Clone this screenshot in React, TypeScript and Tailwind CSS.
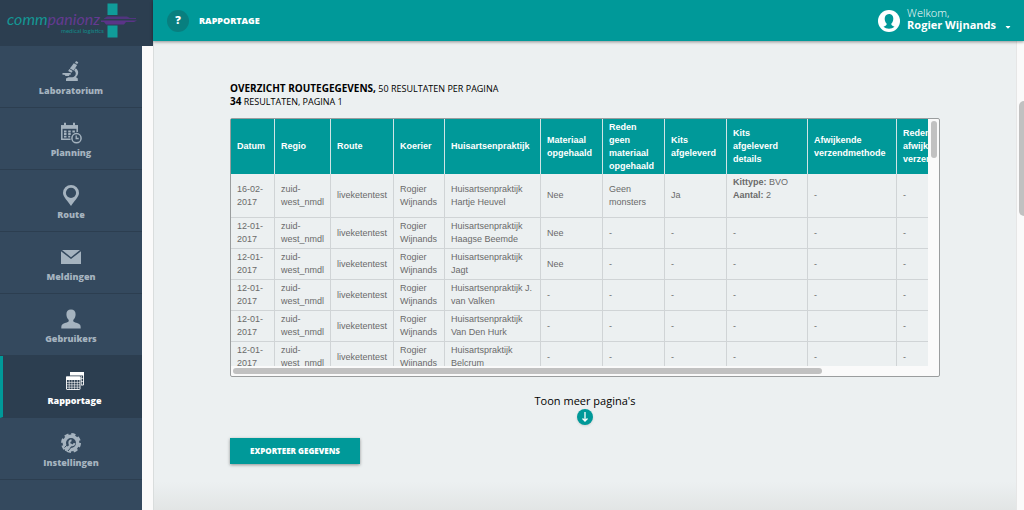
import React from "react";
import { FaCaretDown } from "react-icons/fa";

type Row = {
  datum: string;
  praktijk: string[];
  materiaal: string;
  reden: string;
  kits: string;
  details?: { kittype: string; aantal: number };
};

const rows: Row[] = [
  { datum: "16-02-2017", praktijk: ["Huisartsenpraktijk", "Hartje Heuvel"], materiaal: "Nee", reden: "Geen monsters", kits: "Ja", details: { kittype: "BVO", aantal: 2 } },
  { datum: "12-01-2017", praktijk: ["Huisartsenpraktijk", "Haagse Beemde"], materiaal: "Nee", reden: "-", kits: "-" },
  { datum: "12-01-2017", praktijk: ["Huisartsenpraktijk", "Jagt"], materiaal: "Nee", reden: "-", kits: "-" },
  { datum: "12-01-2017", praktijk: ["Huisartsenpraktijk J.", "van Valken"], materiaal: "-", reden: "-", kits: "-" },
  { datum: "12-01-2017", praktijk: ["Huisartsenpraktijk", "Van Den Hurk"], materiaal: "-", reden: "-", kits: "-" },
  { datum: "12-01-2017", praktijk: ["Huisartspraktijk", "Belcrum"], materiaal: "-", reden: "-", kits: "-" },
];

const columns = [
  { label: "Datum", width: "w-[44px]" },
  { label: "Regio", width: "w-[56px]" },
  { label: "Route", width: "w-[63px]" },
  { label: "Koerier", width: "w-[51px]" },
  { label: "Huisartsenpraktijk", width: "w-[96px]" },
  { label: "Materiaal opgehaald", width: "w-[62px]" },
  { label: "Reden geen materiaal opgehaald", width: "w-[62px]" },
  { label: "Kits afgeleverd", width: "w-[62px]" },
  { label: "Kits\nafgeleverd\ndetails", width: "w-[81px]" },
  { label: "Afwijkende verzendmethode", width: "w-[89px]" },
  { label: "Reden afwijkende verzendmethode", width: "w-[89px]" },
];

const MicroscopeIcon = () => (
  <svg viewBox="0 0 20 20" className="h-5 w-5" fill="currentColor">
    <path d="M15 0l2.300 1.200-1 1.900L14 1.900z" />
    <path d="M12.800 2.200l3.300 1.900-3.400 5.500-3.800-2.200z" />
    <path d="M8.300 7.900l3.400 2-1.300 1.900-3.200-1.900z" />
    <path d="M14.600 7.200c3.400 2 3.400 6.600.2 8.900l2 1.500V20H5v-2.400l2.400-1.300h3.900c3.700-.7 4.700-4.300 1.900-6.800z" />
    <path d="M1.500 12h8.200v1.800H8.200v1.300H4.600l-1.100-1.300h-2z" />
  </svg>
);

const PlanningIcon = () => (
  <svg viewBox="0 0 22 22" className="h-[22px] w-[22px]" fill="none" stroke="currentColor">
    <path d="M10.500 17.200H1.800V4h15.400v6" strokeWidth="1.500" />
    <path d="M1 3.200h17v3.600H1z" fill="currentColor" stroke="none" />
    <path d="M5 .8v3M14 .8v3" strokeWidth="2" />
    <path d="M4 9.500h2.500M8.200 9.500h2.500M12.400 9.500h2.500M4 12h2.500M8.200 12h2.500M4 14.600h2.500M8.200 14.600h2" strokeWidth="1.900" />
    <circle cx="16.500" cy="16.200" r="4.600" strokeWidth="1.500" />
    <path d="M16.200 13.500v3h2.500" strokeWidth="1.300" />
  </svg>
);

const RouteIcon = () => (
  <svg viewBox="0 0 16 21" className="h-[21px] w-4" fill="currentColor" fillRule="evenodd">
    <path d="M8 0a8 8 0 0 0-8 8c0 4 5 8 8 13 3-5 8-9 8-13a8 8 0 0 0-8-8zm0 2.700a5 5 0 1 1 0 10.200A5 5 0 0 1 8 2.700z" />
  </svg>
);

const MailIcon = () => (
  <svg viewBox="0 0 20 14" className="h-[14px] w-5" fill="currentColor">
    <path d="M1 0h18l-9 7.200z" />
    <path d="M0 1.200l10 7.900 10-7.900V14H0z" />
  </svg>
);

const UserIcon = () => (
  <svg viewBox="0 0 20 20" className="h-5 w-5" fill="currentColor">
    <path d="M10 .5c-3 0-4.600 2-4.600 4.800 0 2 .7 4.200 2 5.300.5.700.5 1.700-.1 2.200-1.700 1-5.100 1.600-6.300 2.900C.3 16.500.3 18 .3 19.500h19.400c0-1.500 0-3-.7-3.800-1.200-1.300-4.600-1.900-6.300-2.900-.6-.5-.6-1.500-.1-2.200 1.300-1.100 2-3.300 2-5.300C14.600 2.500 13 .5 10 .5z" />
  </svg>
);

const RapportageIcon = () => (
  <svg viewBox="0 0 20 20" className="h-5 w-5" fill="none" stroke="currentColor">
    <path d="M5.500 4V1.500h13V14H16" strokeWidth=".9" />
    <path d="M5 1h14v3.500H5z" fill="currentColor" stroke="none" />
    <path d="M16 7.500h2.500M16 10.500h2.500M16.500 5v9" strokeWidth=".6" />
    <rect x="1.500" y="6" width="13.500" height="12.500" rx=".5" strokeWidth=".9" />
    <path d="M1 5.500h14.500V9H1z" fill="currentColor" stroke="none" />
    <path d="M4.200 9v9.500M6.900 9v9.500M9.600 9v9.500M12.300 9v9.500M1.500 11.400h13.500M1.500 13.800h13.500M1.500 16.200h13.500" strokeWidth=".6" />
  </svg>
);

// gear with a wrench lying over the lower left
const SettingsIcon = () => (
  <svg viewBox="0 0 20 20" className="h-5 w-5" fill="none" stroke="currentColor">
    <circle cx="10" cy="10" r="6.700" strokeWidth="3.400" />
    <circle cx="10" cy="10" r="8.900" strokeWidth="2.200" strokeDasharray="4.200 2.790" />
    <path d="M3.500 14.500l3-2.800M7 18l2.500-3" stroke="#34495e" strokeWidth="1" />
    <path d="M5 16.800l5-5" strokeWidth="2.400" strokeLinecap="round" />
    <path d="M10.500 7.200a2.600 2.600 0 1 0 3 3" strokeWidth="1.900" />
  </svg>
);

const menuItems = [
  { label: "Laboratorium", icon: <MicroscopeIcon /> },
  { label: "Planning", icon: <PlanningIcon /> },
  { label: "Route", icon: <RouteIcon /> },
  { label: "Meldingen", icon: <MailIcon /> },
  { label: "Gebruikers", icon: <UserIcon /> },
  { label: "Rapportage", icon: <RapportageIcon />, active: true },
  { label: "Instellingen", icon: <SettingsIcon /> },
];

const Logo = () => (
  <div className="h-[46px] w-full bg-[#2c3e50]">
    <svg viewBox="0 0 153 46" className="h-[46px] w-[153px]" role="img" aria-label="commpanionz medical logistics">
      <path d="M107.500 3.500h10v11.500h-10zM107.500 25.500h10v12h-10z" fill="#109c9a" />
      <path d="M104 18.500l3-2h20l3 1.500h6v1h-32z" fill="#51357f" />
      <path d="M101 20.500h36l-3 1.500h-8l-2 2.500h-18l-2-2.500h-3z" fill="#5b3488" />
      <text x="7" y="25" fontFamily="Lato" fontSize="16" fontStyle="italic">
        <tspan fill="#149694">comm</tspan>
        <tspan fill="#643a90">panionz</tspan>
      </text>
      <text x="61" y="33" fontFamily="Lato" fontSize="6" fill="#128a89">medical logistics</text>
    </svg>
  </div>
);

const Sidebar = () => (
  <aside className="flex w-[153px] shrink-0 flex-col bg-[#fafafa]">
    <Logo />
    <nav className="w-[142px] flex-1 bg-[#34495e]">
      {menuItems.map((item) => (
        <a
          key={item.label}
          href="#"
          className={
            item.active
              ? "flex h-[62px] flex-col items-center border-b border-[#2c3e50] border-l-[3px] border-l-[#009999] bg-[#2c3e50] pl-1 pt-[13px] text-white"
              : "flex h-[62px] flex-col items-center border-b border-[#2c3e50] pt-[13px] text-[#a5b3bf]"
          }
        >
          <span className="flex h-6 items-center">{item.icon}</span>
          <span className="text-[9px] font-extrabold leading-4">{item.label}</span>
        </a>
      ))}
    </nav>
  </aside>
);

const Header = () => (
  <header className="relative flex h-[41px] shrink-0 items-center justify-between bg-[#009999] pl-[14px] pr-3 text-white shadow-[0_1px_3px_rgba(0,0,0,0.4)]">
    <div className="flex items-center gap-[10px]">
      <button className="h-[22px] w-[22px] rounded-full bg-[#087f7f] text-[11px] font-extrabold">?</button>
      <h1 className="text-[9px] font-extrabold">RAPPORTAGE</h1>
    </div>
    <button className="flex items-center text-left">
      <svg viewBox="0 0 22 22" className="mr-[7px] h-[22px] w-[22px]">
        <circle cx="11" cy="11" r="11" fill="white" />
        <path d="M11 4C8 4 6.700 6.200 6.700 8.700c0 2 .8 3.800 1.900 4.900.3 1.400-.4 1.900-1.500 2.400l-1.600.8c1.500 1.300 3.400 2 5.500 2s4-.7 5.500-2l-1.600-.8c-1.100-.5-1.800-1-1.500-2.400 1.100-1.100 1.900-2.900 1.900-4.900C15.300 6.200 14 4 11 4z" fill="#009999" />
      </svg>
      <span className="flex flex-col pb-[3px] text-[11px] leading-3">
        <span className="font-light">Welkom,</span>
        <span className="font-bold">Rogier Wijnands</span>
      </span>
      <FaCaretDown className="ml-2 mt-3 h-2 w-2" />
    </button>
  </header>
);

const cell = "border-b border-r border-[#d0d4d6] px-[6px] py-[2px] align-middle";

const RouteTable = () => (
  <div className="rounded-[2px] border border-[#9a9d9e] bg-[#fafafa]">
    <div className="flex">
      <div className="h-[247px] min-w-0 flex-1 overflow-hidden bg-[#ecf0f1]">
        <table className="w-[755px] table-fixed border-separate border-spacing-0 text-left font-['Liberation_Sans',sans-serif] text-[9px] leading-[13px]">
          <thead>
            <tr className="h-[55px] bg-[#009999] text-white">
              {columns.map((col) => (
                <th key={col.label} className={`${col.width} whitespace-pre-line border-r border-[#d0e4e5] px-[6px] align-middle font-bold`}>
                  {col.label}
                </th>
              ))}
            </tr>
          </thead>
          <tbody className="text-[#6a6a6a]">
            {rows.map((row, i) => (
              <tr key={i}>
                <td className={cell}>{row.datum}</td>
                <td className={cell}>zuid-<br />west_nmdl</td>
                <td className={cell}>liveketentest</td>
                <td className={cell}>Rogier Wijnands</td>
                <td className={cell}>{row.praktijk[0]}<br />{row.praktijk[1]}</td>
                <td className={cell}>{row.materiaal}</td>
                <td className={cell}>{row.reden}</td>
                <td className={cell}>{row.kits}</td>
                <td className={cell}>
                  {row.details ? (
                    <div className="h-[39px]">
                      <p><b>Kittype:</b> {row.details.kittype}</p>
                      <p><b>Aantal:</b> {row.details.aantal}</p>
                    </div>
                  ) : "-"}
                </td>
                <td className={cell}>-</td>
                <td className={cell}>-</td>
              </tr>
            ))}
          </tbody>
        </table>
      </div>
      <div className="w-[11px] px-[3px] pt-[2px]">
        <div className="h-[37px] w-[6px] rounded-full bg-[#c1c1c1]" />
      </div>
    </div>
    <div className="h-[10px] pl-[2px] pr-[117px] pt-[2px]">
      <div className="h-[6px] rounded-full bg-[#c1c1c1]" />
    </div>
  </div>
);

const App: React.FC = () => {
  return (
    <div className="flex h-screen overflow-hidden bg-[#ecf0f1] font-['Open_Sans',sans-serif]">
      <Sidebar />
      <div className="flex min-w-0 flex-1 flex-col">
        <Header />
        <div className="flex min-h-0 flex-1">
          <main className="min-w-0 flex-1 border-l border-[#d9dddd] bg-linear-to-b from-[#ecf0f1] from-94% to-[#e2e5e5] px-[76px] pt-[41px]">
            <div className="text-[9px] leading-[13px] text-black">
              <h2><span className="text-[10px] font-bold">OVERZICHT ROUTEGEGEVENS,</span> 50 RESULTATEN PER PAGINA</h2>
              <p><span className="text-[10px] font-bold">34</span> RESULTATEN, PAGINA 1</p>
            </div>
            <div className="mt-[10px]">
              <RouteTable />
            </div>
            <div className="mt-4 flex flex-col items-center">
              <span className="text-[11px] leading-4">Toon meer pagina's</span>
              <button className="flex h-4 w-4 items-center justify-center rounded-full bg-[#009999] text-white shadow" aria-label="Toon meer pagina's">
                <svg viewBox="0 0 10 10" className="h-[10px] w-[10px]" fill="none" stroke="currentColor" strokeWidth="1.300">
                  <path d="M5 0v9M2.500 6.500L5 9l2.500-2.500" />
                </svg>
              </button>
            </div>
            <button className="mt-[13px] h-[26px] w-[130px] bg-[#009999] text-[8px] font-extrabold text-white shadow-[0_1px_3px_rgba(0,0,0,0.4)]">
              EXPORTEER GEGEVENS
            </button>
          </main>
          <div className="w-2 border-l border-[#e6e6e6] bg-[#fafafa] pl-[2px] pt-[60px]">
            <div className="h-[115px] rounded-l-full bg-[#c1c1c1]" />
          </div>
        </div>
      </div>
    </div>
  );
};

export default App;
